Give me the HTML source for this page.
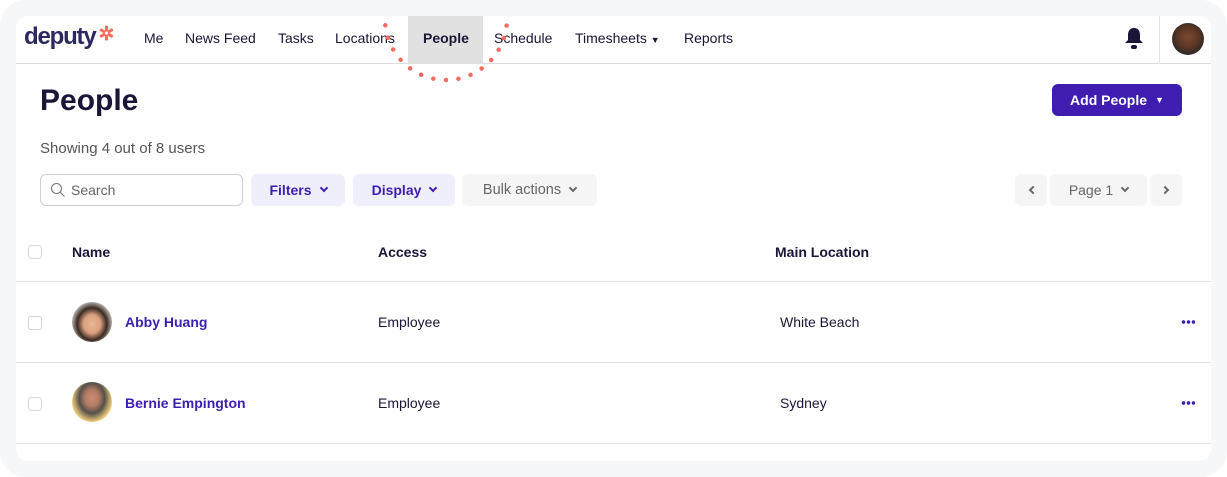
<!DOCTYPE html>
<html><head><meta charset="utf-8"><style>
*{box-sizing:border-box;margin:0;padding:0}
body{width:1227px;height:477px;background:#fff;font-family:"Liberation Sans",Arial,sans-serif;color:#1b1537;overflow:hidden;position:relative}
.outer{position:absolute;left:0;top:0;width:1227px;height:477px;background:#f6f7f9;border-radius:26px}
.card{position:absolute;left:16px;top:16px;width:1195px;height:445px;background:#fff;border-radius:12px;overflow:hidden}
.nav{position:absolute;left:0;top:0;width:1195px;height:48px;border-bottom:1px solid #dcdcdc}
.nav a{position:absolute;top:14px;font-size:14px;color:#1b1537}
.logo{position:absolute;left:8px;top:7px;font-size:24px;font-weight:bold;color:#2d2860;letter-spacing:-1.2px}
.peoplebg{position:absolute;left:392px;top:0;width:75px;height:48px;background:#e1e1e1}
.abs{position:absolute}
.btn{position:absolute;border-radius:6px;font-size:14px;font-weight:bold;display:flex;align-items:center;justify-content:center}
.chev{display:inline-block;width:6px;height:6px;border-right:2px solid currentColor;border-bottom:2px solid currentColor;transform:rotate(45deg);margin-left:9px;margin-top:-4px}
.hr{position:absolute;left:0;width:1195px;height:1px;background:#e3e3e3}
.cb{position:absolute;left:12px;width:14px;height:14px;border:1px solid #d6d6d6;border-radius:3px}
.th{position:absolute;top:228px;font-size:14px;font-weight:bold}
.td{position:absolute;font-size:14px}
.name{position:absolute;font-size:14px;font-weight:bold;color:#3d1eb0}
.av{position:absolute;left:56px;width:40px;height:40px;border-radius:50%}
.dots{position:absolute;left:1165px;width:14px;height:4px;background:radial-gradient(circle,#3d1eb0 1.6px,transparent 2px) 0 0/5px 4px repeat-x}
</style></head><body>
<div class="outer"></div>
<div class="card">
 <div class="nav">
  <div class="logo">deputy<span style="color:#f26d5b;font-size:19px;position:relative;top:-4px;margin-left:3px">✲</span></div>
  <div class="peoplebg"></div>
  <a style="left:128px">Me</a>
  <a style="left:169px">News Feed</a>
  <a style="left:262px">Tasks</a>
  <a style="left:319px">Locations</a>
  <a style="left:407px;font-weight:bold">People</a>
  <a style="left:478px">Schedule</a>
  <a style="left:559px">Timesheets <span style="font-size:9px">▼</span></a>
  <a style="left:668px">Reports</a>
  <svg class="abs" style="left:1108px;top:11px" width="20" height="24" viewBox="0 0 20 24"><path d="M10 1c-4 0-6 3-6 7v5l-3 3h18l-3-3V8c0-4-2-7-6-7z" fill="#1b1537"/><rect x="7" y="18" width="6" height="4" rx="2" fill="#1b1537"/></svg>
  <div class="abs" style="left:1143px;top:0;width:1px;height:48px;background:#e3e3e3"></div>
  <div class="abs" style="left:1156px;top:7px;width:32px;height:32px;border-radius:50%;background:radial-gradient(circle at 50% 45%,#7a4a32 0,#5a3522 45%,#2f2a28 70%,#8a8f7a 100%)"></div>
 </div>
 <svg class="abs" style="left:0;top:0" width="1195" height="80"><circle cx="430" cy="3" r="61" transform="rotate(90 430 3)" fill="none" stroke="#f46a5e" stroke-width="4.5" stroke-linecap="round" stroke-dasharray="0 12.78"/></svg>
 <div class="abs" style="left:24px;top:68px;font-size:30px;font-weight:bold">People</div>
 <div class="btn" style="left:1036px;top:68px;width:130px;height:32px;background:#3d1eb0;color:#fff">Add People <span style="font-size:9px;margin-left:8px">▼</span></div>
 <div class="abs" style="left:24px;top:124px;font-size:15px;color:#555">Showing 4 out of 8 users</div>
 <div class="abs" style="left:24px;top:158px;width:203px;height:32px;border:1px solid #cfcfcf;border-radius:6px"></div>
 <svg class="abs" style="left:34px;top:166px" width="16" height="16" viewBox="0 0 16 16"><circle cx="6.5" cy="6.5" r="5" fill="none" stroke="#777" stroke-width="1.1"/><path d="M10 10l4.5 4.5" stroke="#777" stroke-width="1.1"/></svg>
 <div class="abs" style="left:55px;top:166px;font-size:14px;color:#666">Search</div>
 <div class="btn" style="left:235px;top:158px;width:94px;height:32px;background:#efeefb;color:#3d1eb0">Filters<span class="chev"></span></div>
 <div class="btn" style="left:337px;top:158px;width:102px;height:32px;background:#efeefb;color:#3d1eb0">Display<span class="chev"></span></div>
 <div class="btn" style="left:446px;top:158px;width:135px;height:32px;background:#f5f5f5;color:#666;font-weight:normal;font-size:14.5px">Bulk actions<span class="chev"></span></div>
 <div class="btn" style="left:999px;top:158px;width:32px;height:32px;background:#f5f5f5;color:#666"><span class="chev" style="transform:rotate(135deg);margin:0 0 0 3px"></span></div>
 <div class="btn" style="left:1034px;top:158px;width:97px;height:32px;background:#f5f5f5;color:#666;font-weight:normal">Page 1<span class="chev"></span></div>
 <div class="btn" style="left:1134px;top:158px;width:32px;height:32px;background:#f5f5f5;color:#666"><span class="chev" style="transform:rotate(-45deg);margin:0 3px 0 0"></span></div>
 <div class="cb" style="top:229px"></div>
 <div class="th" style="left:56px">Name</div>
 <div class="th" style="left:362px">Access</div>
 <div class="th" style="left:759px">Main Location</div>
 <div class="hr" style="top:265px"></div>
 <div class="cb" style="top:300px"></div>
 <div class="av" style="top:286px;background:radial-gradient(ellipse at 50% 55%,#e8b897 0,#d9a07e 30%,#3a2a22 52%,#cfcac4 75%)"></div>
 <div class="name" style="left:109px;top:298px">Abby Huang</div>
 <div class="td" style="left:362px;top:298px">Employee</div>
 <div class="td" style="left:764px;top:298px">White Beach</div>
 <div class="dots" style="top:304px"></div>
 <div class="hr" style="top:346px"></div>
 <div class="cb" style="top:381px"></div>
 <div class="av" style="top:366px;background:radial-gradient(ellipse at 50% 40%,#c98e74 0,#b07a62 25%,#54504a 45%,#e9c97a 70%,#7d8a84 90%)"></div>
 <div class="name" style="left:109px;top:379px">Bernie Empington</div>
 <div class="td" style="left:362px;top:379px">Employee</div>
 <div class="td" style="left:764px;top:379px">Sydney</div>
 <div class="dots" style="top:385px"></div>
 <div class="hr" style="top:427px"></div>
</div>
</body></html>
